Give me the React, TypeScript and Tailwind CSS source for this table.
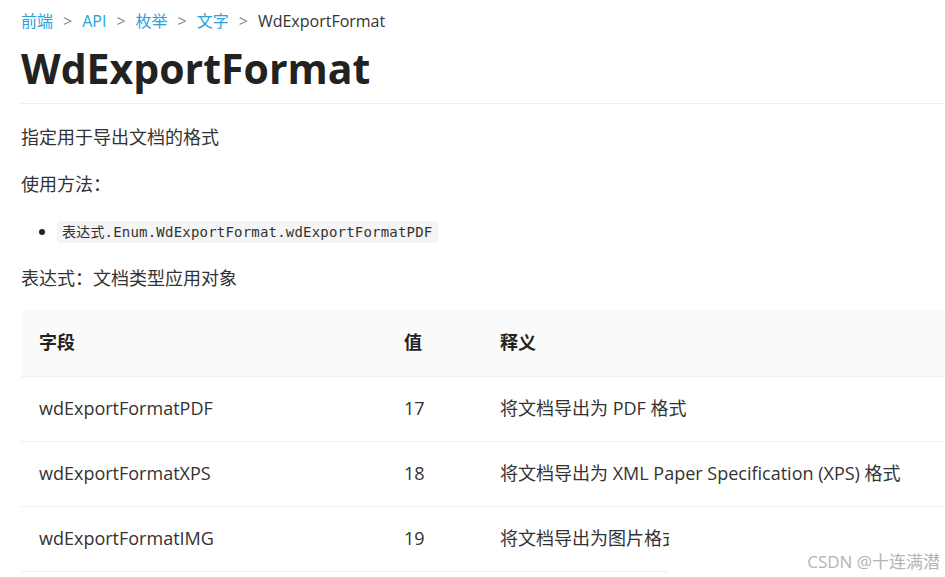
const font = { fontFamily: '"Open Sans", "Noto Sans CJK SC", sans-serif' };

const rows = [
  { name: "wdExportFormatPDF", value: "17", desc: "将文档导出为 PDF 格式" },
  { name: "wdExportFormatXPS", value: "18", desc: "将文档导出为 XML Paper Specification (XPS) 格式" },
  { name: "wdExportFormatIMG", value: "19", desc: "将文档导出为图片格式" },
];

export default function App() {
  return (
    <div className="relative h-[577px] w-[945px] overflow-hidden bg-white text-[#333]" style={font}>
      <div className="pl-[21px]">
        {/* 面包屑 */}
        <div className="flex h-[40px] items-center gap-[10px] pt-[1px] text-[16px]">
          <span className="text-[#2aa2dc]">前端</span>
          <span className="text-[#8a8a8a]">&gt;</span>
          <span className="text-[#2aa2dc]">API</span>
          <span className="text-[#8a8a8a]">&gt;</span>
          <span className="text-[#2aa2dc]">枚举</span>
          <span className="text-[#8a8a8a]">&gt;</span>
          <span className="text-[#2aa2dc]">文字</span>
          <span className="text-[#8a8a8a]">&gt;</span>
          <span className="text-[#333]">WdExportFormat</span>
        </div>

        {/* 标题 */}
        <h1 className="h-[64px] border-b border-[#eeeeee] text-[41px] leading-[56px] font-bold text-[#222]">
          WdExportFormat
        </h1>

        <p className="mt-[21px] text-[18px] leading-[24px]">指定用于导出文档的格式</p>
        <p className="mt-[23px] text-[18px] leading-[24px]">使用方法：</p>

        <ul className="mt-[23px] list-disc pl-[36px] text-[16px]">
          <li className="marker:text-[#222]">
            <code
              className="inline-block rounded-[3px] bg-[#f5f5f5] px-[5px] py-[2px] text-[14px] leading-[18px] tracking-[0.2px] text-[#333]"
              style={{ fontFamily: '"DejaVu Sans Mono", "Noto Sans CJK SC", monospace' }}
            >
              表达式.Enum.WdExportFormat.wdExportFormatPDF
            </code>
          </li>
        </ul>

        <p className="mt-[23px] text-[18px] leading-[24px]">表达式：文档类型应用对象</p>

        {/* 表格 */}
        <table className="mt-[20px] w-[924px] border-collapse text-left text-[18px]">
          <thead>
            <tr className="h-[66px] bg-[#fafafa]">
              <th className="w-[365px] pl-[18px] font-bold text-[#222]">字段</th>
              <th className="w-[96px] pl-[18px] font-bold text-[#222]">值</th>
              <th className="pl-[18px] font-bold text-[#222]">释义</th>
            </tr>
          </thead>
          <tbody>
            {rows.map((r) => (
              <tr key={r.name} className="h-[65px] border-t border-[#f0f0f0] last:border-b">
                <td className="pl-[18px]">{r.name}</td>
                <td className="pl-[18px]">{r.value}</td>
                <td className="pl-[18px]">{r.desc}</td>
              </tr>
            ))}
          </tbody>
        </table>
      </div>

      {/* 水印 */}
      <div className="absolute right-0 bottom-[5px] flex h-[44px] w-[276px] items-end justify-end bg-white pr-[5px] text-[17px] leading-[20px] text-[#b4b4b4]">
        CSDN @十连满潜
      </div>
    </div>
  );
}
